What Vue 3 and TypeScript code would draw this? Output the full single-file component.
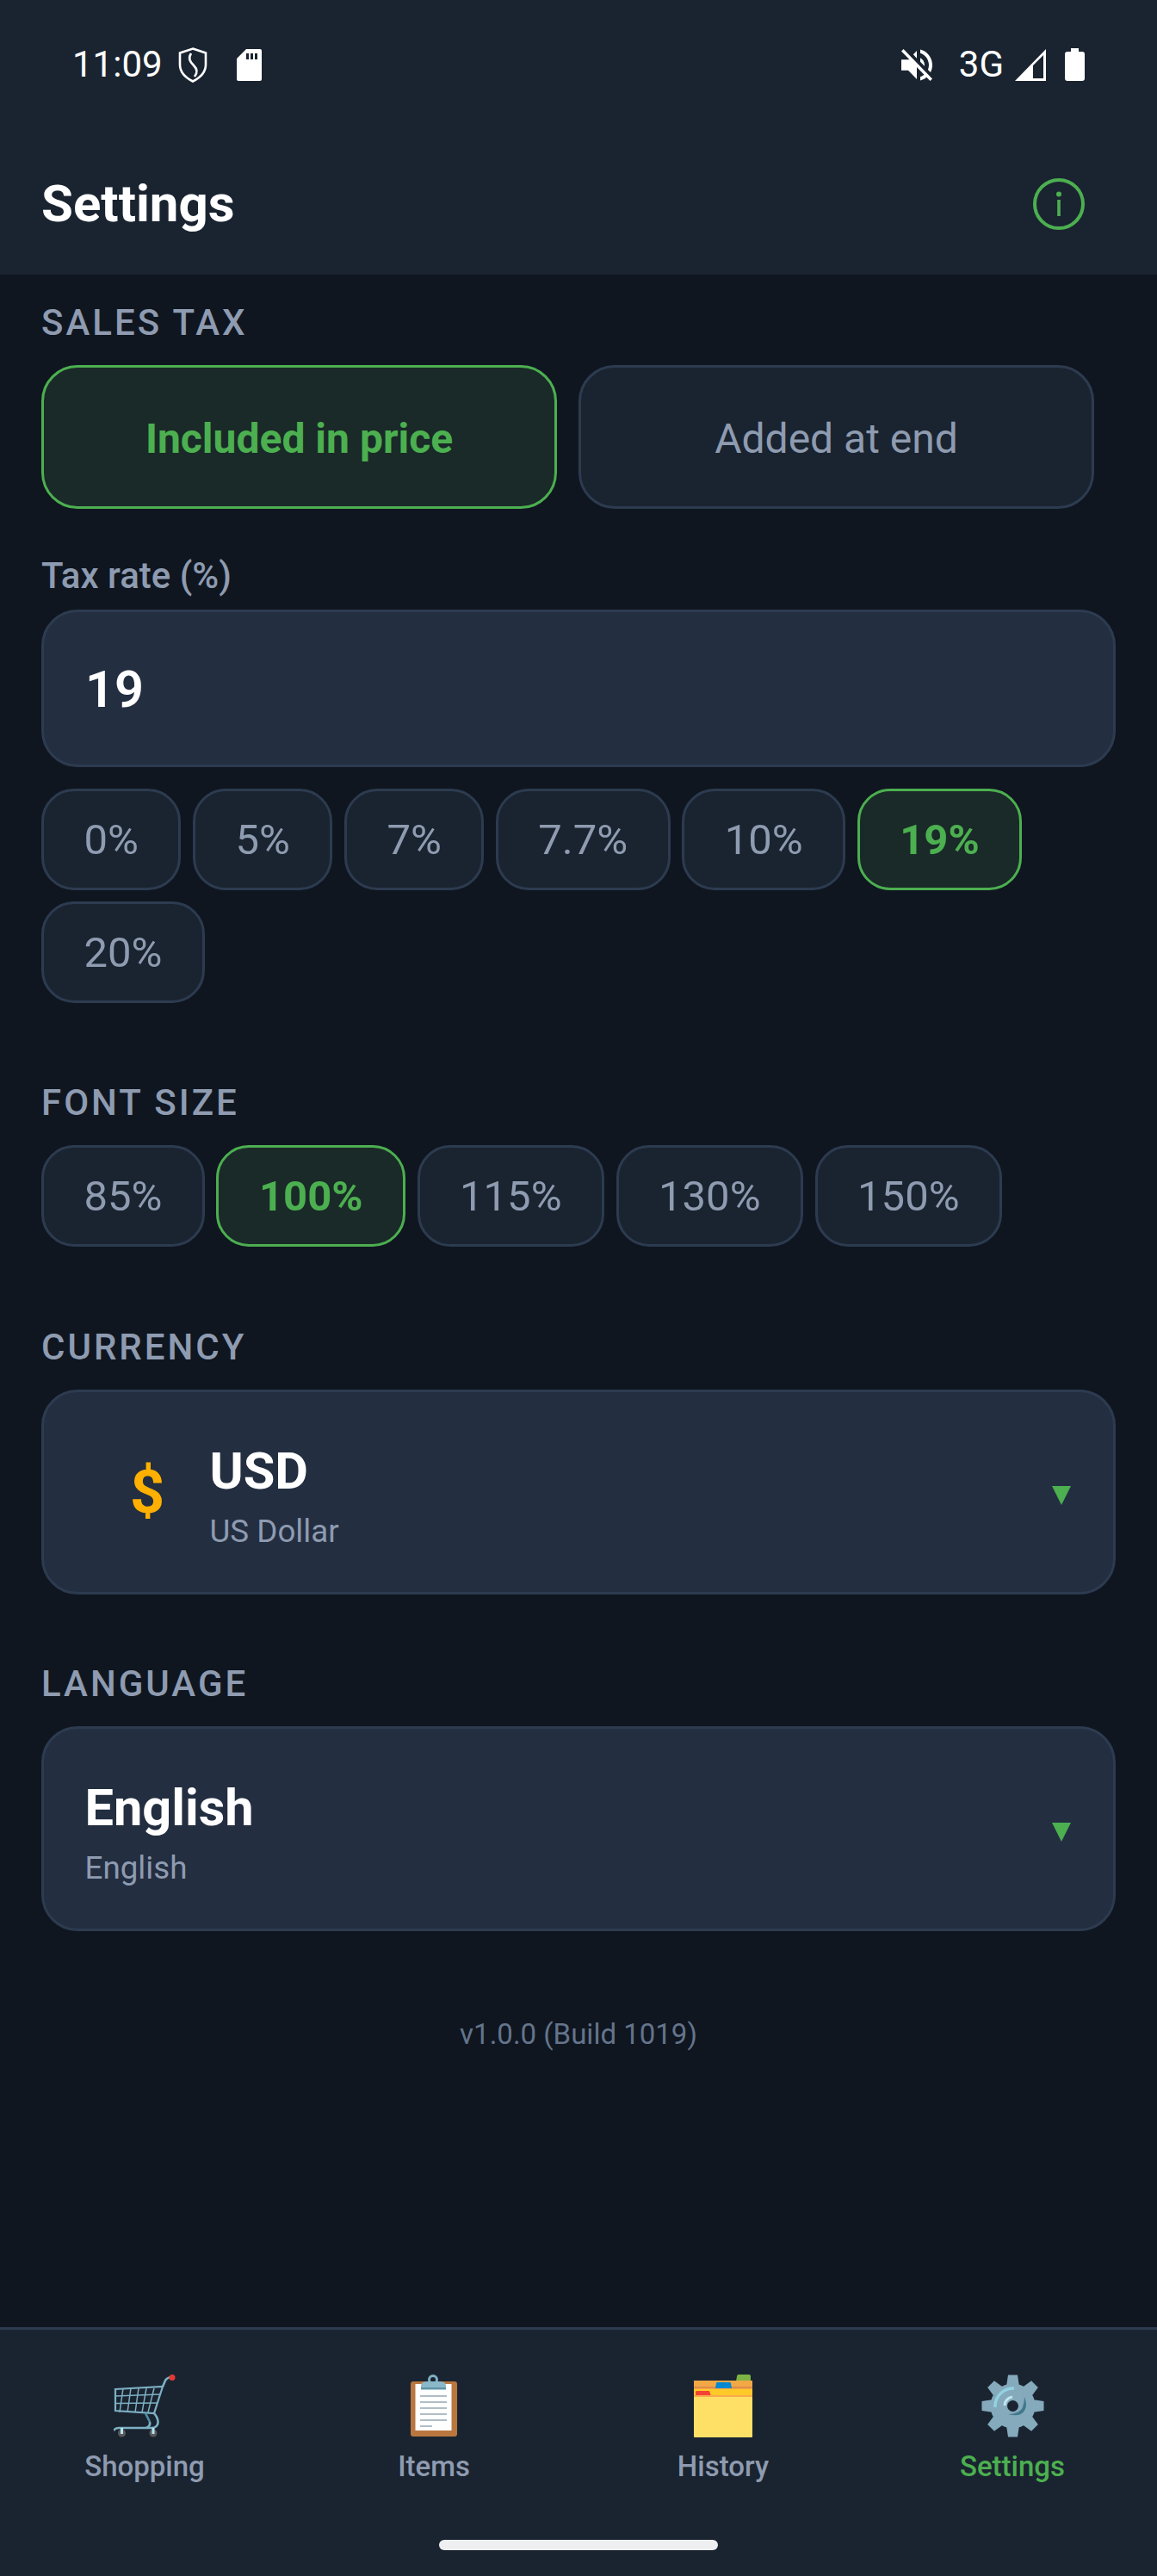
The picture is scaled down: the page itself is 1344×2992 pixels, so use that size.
<script setup lang="ts">
import { ref } from 'vue'

// 税率和字号选项
const taxRates = ['0%', '5%', '7%', '7.7%', '10%', '19%', '20%']
const fontSizes = ['85%', '100%', '115%', '130%', '150%']

const taxMode = ref('included')
const taxRate = ref('19%')
const fontSize = ref('100%')

const tabs = [
  { key: 'shopping', label: 'Shopping' },
  { key: 'items', label: 'Items' },
  { key: 'history', label: 'History' },
  { key: 'settings', label: 'Settings' }
]

// 购物车的网格线
const cartCols = [
  [11, 7],
  [20, 16],
  [29, 25],
  [38, 33],
  [47, 40]
]

// 齿轮的八个齿
const gearTeeth = [0, 45, 90, 135, 180, 225, 270, 315]
const clipLines = [24, 31, 38, 45, 52]
</script>

<template>
  <div class="screen">
    <header class="top">
      <div class="status">
        <div class="status-side">
          <span class="status-text">11:09</span>
          <svg class="shield" width="34" height="41" viewBox="0 0 34 41" fill="none" stroke="#fff" stroke-width="2.6">
            <path d="M17 1.500 L32 6.500 V20 C32 29 26 35 17 39.500 C8 35 2 29 2 20 V6.500 Z" />
            <path d="M15 7 C11 13 14 17 18 21 C22 25 23 29 19 34" />
          </svg>
          <svg class="sd" width="29" height="37" viewBox="0 0 29 37">
            <path fill="#fff" fill-rule="evenodd" d="M11 0 H27 Q29 0 29 2 V35 Q29 37 27 37 H2 Q0 37 0 35 V11 Z M11 5 V12 H14 V5 Z M16 5 V12 H19 V5 Z M21 5 V12 H24 V5 Z" />
          </svg>
        </div>
        <div class="status-side">
          <svg class="mute" width="36" height="37" viewBox="3 3 18 18" preserveAspectRatio="none">
            <path fill="#fff" d="M16.5 12c0-1.77-1.02-3.29-2.5-4.03v2.21l2.45 2.45c.03-.2.05-.41.05-.63zm2.5 0c0 .94-.2 1.82-.54 2.64l1.51 1.51C20.63 14.91 21 13.5 21 12c0-4.28-2.99-7.86-7-8.77v2.06c2.89.86 5 3.54 5 6.71zM4.27 3L3 4.27 7.73 9H3v6h4l5 5v-6.73l4.25 4.25c-.67.52-1.42.93-2.25 1.18v2.06c1.38-.31 2.63-.95 3.69-1.81L19.73 21 21 19.73l-9-9L4.27 3zM12 4L9.91 6.09 12 8.18V4z" />
          </svg>
          <span class="status-text net">3G</span>
          <svg class="signal" width="36" height="37" viewBox="0 0 36 37">
            <path fill="#fff" fill-rule="evenodd" d="M36 0 V37 H0 Z M21 34 H33 V7 L21 19 Z" />
          </svg>
          <svg class="battery" width="23" height="38" viewBox="0 0 23 38">
            <path fill="#fff" d="M7 0 H16 V4 H20 Q23 4 23 7 V35 Q23 38 20 38 H3 Q0 38 0 35 V7 Q0 4 3 4 H7 Z" />
          </svg>
        </div>
      </div>
      <div class="title-row">
        <h1 class="title">Settings</h1>
        <svg width="60" height="60" viewBox="0 0 60 60" fill="none">
          <circle cx="30" cy="30" r="28" stroke="#4caf50" stroke-width="4" />
          <circle cx="30" cy="18.500" r="3" fill="#4caf50" />
          <rect x="28.200" y="25" width="3.600" height="19" fill="#4caf50" />
        </svg>
      </div>
    </header>

    <main class="content">
      <section class="sales">
        <div class="label">SALES TAX</div>
        <div class="tax-modes">
          <button class="mode" :class="{ active: taxMode === 'included' }">Included in price</button>
          <button class="mode" :class="{ active: taxMode === 'added' }">Added at end</button>
        </div>
        <div class="rate-label">Tax rate (%)</div>
        <div class="rate-input">19</div>
        <div class="chips">
          <button
            v-for="rate in taxRates"
            :key="rate"
            class="chip"
            :class="{ active: rate === taxRate }"
          >
            {{ rate }}
          </button>
        </div>
      </section>

      <section class="font-size">
        <div class="label">FONT SIZE</div>
        <div class="chips">
          <button
            v-for="size in fontSizes"
            :key="size"
            class="chip"
            :class="{ active: size === fontSize }"
          >
            {{ size }}
          </button>
        </div>
      </section>

      <section class="currency">
        <div class="label">CURRENCY</div>
        <div class="picker">
          <span class="symbol">$</span>
          <div class="picker-text">
            <div class="picker-main">USD</div>
            <div class="picker-sub">US Dollar</div>
          </div>
          <svg class="arrow" width="22" height="22" viewBox="0 0 22 22">
            <polygon points="0,0 22,0 11,22" fill="#4caf50" />
          </svg>
        </div>
      </section>

      <section class="language">
        <div class="label">LANGUAGE</div>
        <div class="picker">
          <div class="picker-text">
            <div class="picker-main">English</div>
            <div class="picker-sub">English</div>
          </div>
          <svg class="arrow" width="22" height="22" viewBox="0 0 22 22">
            <polygon points="0,0 22,0 11,22" fill="#4caf50" />
          </svg>
        </div>
      </section>

      <p class="version">v1.0.0 (Build 1019)</p>
    </main>

    <nav class="tabbar">
      <div
        v-for="tab in tabs"
        :key="tab.key"
        class="tab"
        :class="{ active: tab.key === 'settings' }"
      >
        <svg v-if="tab.key === 'shopping'" width="72" height="73" viewBox="0 0 72 73" fill="none" stroke="#7db0c3">
          <path stroke-width="2.200" d="M2 17 L57 14 L47 45 L2 42 Z" />
          <path stroke-width="1.500" d="M2 25 L54 23 M2 33.500 L51 33" />
          <path
            v-for="(col, i) in cartCols"
            :key="i"
            stroke-width="1.500"
            :d="`M${col[0]} 16 L${col[1]} 44`"
          />
          <path stroke-width="2.600" d="M57 14 L60 7 Q62 3.500 67 3" />
          <path stroke-width="2.600" stroke="#4e8ea4" d="M37 45 L42 55" />
          <path stroke-width="2.600" d="M47 45 Q53 52 51 58 Q49 62 44 62 L6 62 Q2 62 0 65" />
          <path stroke-width="2.600" d="M42 55 Q43 60 38 62" />
          <circle cx="68" cy="3.500" r="3.500" fill="#e53935" stroke="none" />
          <circle cx="9.500" cy="68" r="4.500" fill="#5a5a5a" stroke="none" />
          <circle cx="46" cy="68" r="4.500" fill="#5a5a5a" stroke="none" />
          <rect x="8" y="62" width="3" height="7" fill="#b3e5f2" stroke="none" />
          <rect x="44.500" y="62" width="3" height="7" fill="#b3e5f2" stroke="none" />
        </svg>

        <svg v-else-if="tab.key === 'items'" width="54" height="73" viewBox="0 0 54 73">
          <rect x="0" y="8" width="54" height="64" rx="3" fill="#b9773f" />
          <rect x="5.500" y="11" width="42" height="54" fill="#fff" />
          <circle cx="26" cy="6" r="4.500" fill="none" stroke="#7fb0c2" stroke-width="3" />
          <path d="M12 17 V13 Q12 8 20 8 H33 Q41 8 41 13 V17 Z" fill="#8bb8c9" />
          <rect x="12" y="15" width="29" height="2.500" fill="#5f95a8" />
          <rect
            v-for="y in clipLines"
            :key="y"
            x="11"
            :y="y"
            width="31"
            height="2"
            fill="#b0bec5"
          />
          <rect x="11" y="59" width="14" height="2" fill="#b0bec5" />
        </svg>

        <svg v-else-if="tab.key === 'history'" width="68" height="73" viewBox="0 0 68 73">
          <path d="M49 8 L50 2 Q50 0 52 0 H64 Q66 0 66 2 V8 Z" fill="#7cb342" />
          <rect x="0" y="7" width="68" height="12" fill="#f2a845" />
          <rect x="0" y="14" width="68" height="2" fill="#e08c4a" />
          <path d="M25 16 L26 10 Q26 9 28 9 H41 Q43 9 43 10 L44 16 Z" fill="#0288d1" />
          <rect x="0" y="17" width="68" height="8" fill="#ffca28" />
          <path d="M2 25 V20 Q2 19 4 19 H18 L20 25 Z" fill="#f44336" />
          <rect x="0" y="24" width="68" height="3" fill="#f9a94e" />
          <path d="M0 26 H68 V72 Q68 73 67 73 H1 Q0 73 0 72 Z" fill="#ffe066" />
        </svg>

        <svg v-else width="73" height="73" viewBox="0 0 73 73" fill="none">
          <path
            v-for="deg in gearTeeth"
            :key="deg"
            d="M29 14 L31 0.500 H42 L44 14 Z"
            fill="#84aabc"
            :transform="`rotate(${deg} 36.500 36.500)`"
          />
          <circle cx="36.500" cy="36.500" r="26" fill="#84aabc" />
          <path d="M16 38 A21 21 0 0 1 38 16" stroke="#93d2e3" stroke-width="3.500" />
          <path d="M27 36 A10 10 0 0 1 36 26" stroke="#c3e6ef" stroke-width="3" />
          <path d="M50 26 Q54 36 50 42 Q45 50 31 46 Q42 46 47 40 Q50 34 50 26 Z" fill="#40798c" />
          <circle cx="36.500" cy="36.500" r="6.500" fill="#1a2430" />
        </svg>

        <span class="tab-label">{{ tab.label }}</span>
      </div>
      <div class="home-bar"></div>
    </nav>
  </div>
</template>

<style>
html,
body {
  margin: 0;
  background: #0f1620;
}
</style>

<style scoped>
.screen {
  width: 1344px;
  height: 2992px;
  display: flex;
  flex-direction: column;
  overflow: hidden;
  background: #0f1620;
  font-family: Roboto, "Noto Sans", sans-serif;
  color: #fff;
}

.top {
  background: #1a2430;
  height: 319px;
  box-sizing: border-box;
  padding-top: 50px;
}

.status {
  height: 50px;
  display: flex;
  justify-content: space-between;
  padding: 0 84px 0 84px;
}

.status-side {
  display: flex;
  align-items: center;
}

.status-text {
  font-size: 42px;
  line-height: 50px;
}

.shield {
  margin-left: 18px;
}

.sd {
  margin-left: 34px;
}

.net {
  margin-left: 31px;
}

.signal {
  margin-left: 13px;
}

.battery {
  margin-left: 22px;
}

.title-row {
  display: flex;
  align-items: center;
  justify-content: space-between;
  height: 60px;
  margin-top: 107px;
  padding: 0 84px 0 48px;
}

.title {
  margin: 0;
  font-size: 60px;
  font-weight: 700;
  line-height: 60px;
}

.content {
  flex: 1;
  padding: 29px 48px 0;
}

.label {
  font-size: 42px;
  font-weight: 500;
  line-height: 50px;
  letter-spacing: 3px;
  color: #8e9bb0;
  padding-top: 2px;
  margin-bottom: 24px;
}

.tax-modes {
  display: flex;
  gap: 25px;
  margin-right: 25px;
}

button {
  font-family: inherit;
  box-sizing: border-box;
  margin: 0;
}

.mode {
  flex: 1;
  height: 167px;
  padding: 3px 0 0;
  border: 3.500px solid #2d3b50;
  border-radius: 42px;
  background: #1a2430;
  font-size: 48px;
  color: #8e9bb0;
}

.mode.active,
.chip.active {
  border-color: #4caf50;
  background: #1a2a28;
  color: #4caf50;
  font-weight: 700;
}

.rate-label {
  font-size: 42px;
  line-height: 50px;
  font-weight: 500;
  color: #8e9bb0;
  margin-top: 53px;
  margin-bottom: 14px;
}

.rate-input {
  height: 183px;
  box-sizing: border-box;
  display: flex;
  align-items: center;
  padding: 2px 48px 0;
  border: 3.500px solid #2d3b50;
  border-radius: 42px;
  background: #232e41;
  font-size: 59.500px;
  font-weight: 600;
}

.sales .chips {
  margin-top: 25px;
}

.chips {
  display: flex;
  flex-wrap: wrap;
  gap: 13px 13.500px;
}

.chip {
  height: 118px;
  padding: 0 46.500px;
  border: 3.500px solid #2d3b50;
  border-radius: 38px;
  background: #1a2430;
  font-size: 49px;
  color: #8e9bb0;
}

.font-size {
  margin-top: 89px;
}

.currency {
  margin-top: 90px;
}

.language {
  margin-top: 77px;
}

.picker {
  height: 238px;
  box-sizing: border-box;
  display: flex;
  align-items: center;
  padding: 0 49px 0 47.500px;
  border: 3.500px solid #2d3b50;
  border-radius: 42px;
  background: #232e41;
}

.symbol {
  width: 145px;
  text-align: center;
  font-size: 70px;
  font-weight: 700;
  color: #ffb000;
}

.picker-text {
  flex: 1;
  padding-top: 12px;
}

.picker-main {
  font-size: 59.500px;
  font-weight: 700;
  line-height: 70px;
}

.picker-sub {
  font-size: 36.750px;
  line-height: 50px;
  margin-top: 10px;
  color: #8e9bb0;
}

.arrow {
  margin-top: 8px;
}

.version {
  margin: 95px 0 0;
  text-align: center;
  font-size: 33px;
  line-height: 50px;
  color: #64748b;
}

.tabbar {
  position: relative;
  height: 289px;
  box-sizing: border-box;
  display: flex;
  padding-top: 52px;
  border-top: 3.500px solid #2d3b50;
  background: #1a2430;
}

.tab {
  flex: 1;
  display: flex;
  flex-direction: column;
  align-items: center;
}

.tab-label {
  margin-top: 12px;
  font-size: 33px;
  line-height: 44px;
  font-weight: 500;
  color: #8e9bb0;
}

.tab.active .tab-label {
  color: #4caf50;
}

.home-bar {
  position: absolute;
  left: 510px;
  bottom: 30px;
  width: 324px;
  height: 12px;
  border-radius: 6px;
  background: #eeeff1;
}
</style>
